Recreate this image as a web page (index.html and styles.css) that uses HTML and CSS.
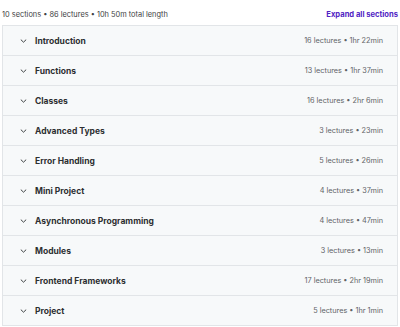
FILE: index.html
```html
<!DOCTYPE html>
<html lang="en">
<head>
  <meta charset="utf-8">
  <title>Course content</title>
  <link rel="stylesheet" href="styles.css">
</head>
<body>
  <div class="summary">
    <span class="totals">10 sections &bull; 86 lectures &bull; 10h 50m total length</span>
    <span class="expand">Expand all sections</span>
  </div>

  <div class="sections">
    <div class="row"><span class="chev"><svg width="7" height="4" viewBox="0 0 7 4"><path d="M.8.6l2.7 2.6L6.2.6" fill="none" stroke="#3e4143" stroke-width="1"/></svg></span><span class="title">Introduction</span><span class="meta">16 lectures &bull; 1hr 22min</span></div>
    <div class="row"><span class="chev"><svg width="7" height="4" viewBox="0 0 7 4"><path d="M.8.6l2.7 2.6L6.2.6" fill="none" stroke="#3e4143" stroke-width="1"/></svg></span><span class="title">Functions</span><span class="meta">13 lectures &bull; 1hr 37min</span></div>
    <div class="row"><span class="chev"><svg width="7" height="4" viewBox="0 0 7 4"><path d="M.8.6l2.7 2.6L6.2.6" fill="none" stroke="#3e4143" stroke-width="1"/></svg></span><span class="title">Classes</span><span class="meta">16 lectures &bull; 2hr 6min</span></div>
    <div class="row"><span class="chev"><svg width="7" height="4" viewBox="0 0 7 4"><path d="M.8.6l2.7 2.6L6.2.6" fill="none" stroke="#3e4143" stroke-width="1"/></svg></span><span class="title">Advanced Types</span><span class="meta">3 lectures &bull; 23min</span></div>
    <div class="row"><span class="chev"><svg width="7" height="4" viewBox="0 0 7 4"><path d="M.8.6l2.7 2.6L6.2.6" fill="none" stroke="#3e4143" stroke-width="1"/></svg></span><span class="title">Error Handling</span><span class="meta">5 lectures &bull; 26min</span></div>
    <div class="row"><span class="chev"><svg width="7" height="4" viewBox="0 0 7 4"><path d="M.8.6l2.7 2.6L6.2.6" fill="none" stroke="#3e4143" stroke-width="1"/></svg></span><span class="title">Mini Project</span><span class="meta">4 lectures &bull; 37min</span></div>
    <div class="row"><span class="chev"><svg width="7" height="4" viewBox="0 0 7 4"><path d="M.8.6l2.7 2.6L6.2.6" fill="none" stroke="#3e4143" stroke-width="1"/></svg></span><span class="title">Asynchronous Programming</span><span class="meta">4 lectures &bull; 47min</span></div>
    <div class="row"><span class="chev"><svg width="7" height="4" viewBox="0 0 7 4"><path d="M.8.6l2.7 2.6L6.2.6" fill="none" stroke="#3e4143" stroke-width="1"/></svg></span><span class="title">Modules</span><span class="meta">3 lectures &bull; 13min</span></div>
    <div class="row"><span class="chev"><svg width="7" height="4" viewBox="0 0 7 4"><path d="M.8.6l2.7 2.6L6.2.6" fill="none" stroke="#3e4143" stroke-width="1"/></svg></span><span class="title">Frontend Frameworks</span><span class="meta">17 lectures &bull; 2hr 19min</span></div>
    <div class="row"><span class="chev"><svg width="7" height="4" viewBox="0 0 7 4"><path d="M.8.6l2.7 2.6L6.2.6" fill="none" stroke="#3e4143" stroke-width="1"/></svg></span><span class="title">Project</span><span class="meta">5 lectures &bull; 1hr 1min</span></div>
  </div>
</body>
</html>
```

FILE: styles.css
```css
body {margin:0; padding:0 2px; background:#fff; font-family:Inter,"Noto Sans",sans-serif; color:#2d2f31;}

.summary {display:flex; justify-content:space-between; align-items:center; height:22px; padding-top:3px; font-size:7.4px;}
.totals {color:#3e4143;}
.expand {color:#5022c3; font-weight:700; font-size:7.6px;}

.sections {border:1px solid #e2e5e8; border-bottom:0;}
.row {display:flex; align-items:center; height:29px; padding:0 14px 0 17px; background:#f7f9fa; border-bottom:1px solid #e2e5e8; font-size:7.3px;}
.chev {display:flex; width:15px;}
.title {flex:1; font-weight:700; font-size:8.5px; color:#2d2f31;}
.meta {color:#5f6367;}
```
